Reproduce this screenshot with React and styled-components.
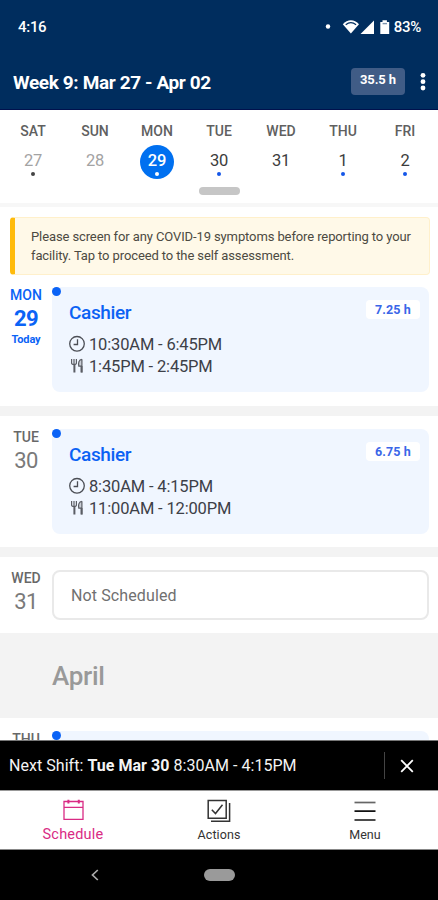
import React from 'react';
import styled, { createGlobalStyle } from 'styled-components';

const GlobalStyle = createGlobalStyle`
  * {
    box-sizing: border-box;
  }

  body {
    margin: 0;
    background: #000;
    font-family: Roboto, 'Noto Sans', sans-serif;
  }
`;

const Screen = styled.div`
  width: 438px;
  height: 900px;
  display: flex;
  flex-direction: column;
  overflow: hidden;
  background: #fff;
`;

const Header = styled.header`
  height: 110px;
  flex: none;
  background: #002d5e;
  border-bottom: 1px solid #00114d;
  color: #fff;
`;

const StatusBar = styled.div`
  display: flex;
  align-items: center;
  height: 54px;
  padding: 0 17px 0 18px;
  font-size: 15px;
  font-weight: 500;
  letter-spacing: -0.3px;

  svg {
    display: block;
  }
`;

const Clock = styled.span`
  flex: 1;
`;

const TitleBar = styled.div`
  display: flex;
  align-items: center;
  height: 55px;
  padding: 0 12px 0 13px;
`;

const Title = styled.h1`
  flex: 1;
  margin: 2px 0 0;
  font-size: 19px;
  line-height: 24px;
  font-weight: 700;
  letter-spacing: -0.38px;
`;

const TotalHours = styled.span`
  width: 54px;
  height: 27px;
  margin-right: 15px;
  border-radius: 4px;
  background: #405c86;
  font-size: 13px;
  font-weight: 700;
  line-height: 24px;
  letter-spacing: -0.1px;
  text-align: center;
`;

const Week = styled.div`
  flex: none;
  height: 97px;
  padding: 0 2px;
  border-bottom: 4px solid #f7f7f7;
`;

const WeekDays = styled.div`
  display: grid;
  grid-template-columns: repeat(7, 62px);
  height: 77px;
  padding-top: 13px;
`;

const WeekDay = styled.div`
  display: flex;
  flex-direction: column;
  align-items: center;
`;

const WeekDayName = styled.span`
  font-size: 14px;
  line-height: 16px;
  font-weight: 500;
  color: #606060;
`;

const WeekDayNumber = styled.span`
  display: flex;
  flex-direction: column;
  align-items: center;
  width: 34px;
  height: 34px;
  margin-top: 6px;
  padding-top: 6px;
  border-radius: 50%;
  font-size: 16.5px;
  line-height: 19px;
  letter-spacing: -0.2px;
  font-weight: ${props => (props.$active ? 500 : 400)};
  background: ${props => (props.$active ? '#0070f0' : 'transparent')};
  color: ${props => (props.$active ? '#fff' : props.$past ? '#a3a3a3' : '#3c3c3c')};
`;

const Dot = styled.i`
  width: 4px;
  height: 4px;
  margin-top: 2px;
  border-radius: 50%;
  background: ${props => props.$color};
`;

const Handle = styled.div`
  width: 41px;
  height: 8px;
  margin: 0 auto;
  border-radius: 4px;
  background: #c6c6c6;
`;

const List = styled.main`
  flex: 1;
  min-height: 0;
  overflow: hidden;
`;

const Banner = styled.p`
  height: 58px;
  margin: 10px 8px 0 10px;
  padding: 9px 0 0 16px;
  border: 1px solid #fff0cb;
  border-left: 5px solid #ffbb0c;
  border-radius: 4px;
  background: #fff9e8;
  color: #4c4a42;
  font-size: 13px;
  line-height: 19px;
  letter-spacing: -0.11px;
  white-space: nowrap;
`;

const DayRow = styled.section`
  display: flex;
  padding: ${props => (props.$first ? '12px 9px 14px 0' : '13px 9px 13px 0')};
  border-bottom: ${props => (props.$last ? '0' : '10px')} solid #f3f3f3;
`;

const DayLabel = styled.div`
  display: flex;
  flex-direction: column;
  align-items: center;
  width: 52px;
  color: ${props => (props.$today ? '#0b63f6' : '#686868')};
`;

const DayName = styled.span`
  font-size: 14px;
  line-height: 16px;
  font-weight: 500;
`;

const DayNumber = styled.span`
  margin-top: 3px;
  font-size: 22px;
  line-height: 26px;
  letter-spacing: -0.5px;
  font-weight: ${props => (props.$today ? 700 : 400)};
  color: ${props => (props.$today ? 'inherit' : '#7a7a7a')};
`;

const TodayMark = styled.span`
  font-size: 11px;
  line-height: 16px;
  font-weight: 700;
  letter-spacing: -0.1px;
`;

const ShiftCard = styled.article`
  position: relative;
  flex: 1;
  height: 105px;
  padding: 14px 9px 0 17px;
  border-radius: 8px;
  background: #f0f6ff;
`;

const ShiftMarker = styled.i`
  position: absolute;
  top: 0;
  left: 0;
  width: 9px;
  height: 9px;
  border-radius: 50%;
  background: #0b63f6;
`;

const ShiftTop = styled.div`
  display: flex;
  align-items: flex-start;
  justify-content: space-between;
  height: 32px;
`;

const ShiftRole = styled.h2`
  margin: 0;
  font-size: 19px;
  line-height: 24px;
  font-weight: 500;
  letter-spacing: -0.38px;
  color: #0b62f4;
`;

const ShiftHours = styled.span`
  width: 54px;
  height: 19px;
  margin-top: -1px;
  border-radius: 4px;
  background: #fff;
  color: #3b66e8;
  font-size: 12.5px;
  font-weight: 700;
  line-height: 20px;
  text-align: center;
  letter-spacing: 0.1px;
`;

const ShiftLine = styled.div`
  display: flex;
  align-items: center;
  gap: 3px;
  height: 22px;
  font-size: 16.5px;
  letter-spacing: -0.16px;
  color: #3d4048;

  svg {
    display: block;
  }
`;

const EmptyCard = styled.div`
  flex: 1;
  height: 50px;
  padding-left: 17px;
  border: 2px solid #e9e9e9;
  border-radius: 8px;
  color: #707070;
  font-size: 16px;
  line-height: 48px;
  letter-spacing: 0.12px;
`;

const Month = styled.h2`
  height: 85px;
  margin: 0;
  padding-left: 52px;
  background: #f3f3f3;
  color: #999;
  font-size: 26px;
  line-height: 87px;
  font-weight: 500;
  letter-spacing: -0.3px;
`;

const NextShift = styled.div`
  display: flex;
  align-items: center;
  flex: none;
  height: 51px;
  padding-left: 9px;
  border-top: 1px solid #777;
  border-bottom: 1px solid #999;
  background: #000;
  color: #f4f4f4;
  font-size: 16px;
  letter-spacing: 0.04px;
`;

const NextShiftText = styled.span`
  flex: 1;
`;

const CloseButton = styled.button`
  display: flex;
  align-items: center;
  justify-content: center;
  width: 54px;
  height: 27px;
  padding: 0 9px 0 0;
  border: 0;
  border-left: 1px solid #444;
  background: none;
`;

const Tabs = styled.nav`
  display: grid;
  grid-template-columns: repeat(3, 1fr);
  flex: none;
  height: 59px;
  border-bottom: 1px solid #888;
`;

const Tab = styled.a`
  display: flex;
  flex-direction: column;
  align-items: center;
  padding-top: 7px;
  font-size: ${props => (props.$active ? '14.5px' : '12.5px')};
  line-height: 19px;
  letter-spacing: ${props => (props.$active ? '0.2px' : '0.1px')};
  color: ${props => (props.$active ? '#d92b84' : '#333')};

  svg {
    display: block;
    margin-bottom: 3px;
  }
`;

const SystemNav = styled.div`
  display: grid;
  grid-template-columns: 190px 58px 190px;
  align-items: center;
  justify-items: center;
  flex: none;
  height: 50px;
  background: #000;
`;

const HomePill = styled.i`
  width: 31px;
  height: 12px;
  border-radius: 6px;
  background: #9a9a9a;
`;

const StatusIcons = () => (
  <svg width="69" height="18" viewBox="0 0 69 18" fill="#fff">
    <circle cx="3" cy="8.5" r="2.2" />
    <path d="M17.8 6.2C22.5 .8 29.3 .8 34 6.2L25.9 15.6z" />
    <path d="M20.7 6.7Q25.9 2.6 31.1 6.7" fill="none" stroke="#002d5e" strokeWidth="1.1" />
    <path d="M49 2.5V16H35.5z" />
    <path d="M55.3 4h2.2V2.2h4.4V4h2.3v12h-8.9z" />
    <path d="M57.6 5.6h4.4" stroke="#7d94b0" strokeWidth="1.4" />
  </svg>
);

const MoreIcon = () => (
  <svg width="6" height="20" viewBox="0 0 6 20" fill="#fff">
    <circle cx="3" cy="3.3" r="2.4" />
    <circle cx="3" cy="9.7" r="2.4" />
    <circle cx="3" cy="16" r="2.4" />
  </svg>
);

const ClockIcon = () => (
  <svg width="17" height="18" viewBox="0 0 17 18" fill="none" stroke="#4b4e55" strokeWidth="1.3">
    <circle cx="8" cy="8.8" r="7.3" />
    <path d="M8.5 4.2V9.5H4.6" />
  </svg>
);

const MealIcon = () => (
  <svg width="17" height="16" viewBox="0 0 17 16" fill="none" stroke="#5a5d64" strokeWidth="1.2">
    <path d="M2.6 1V5Q2.6 6.5 5 6.5Q7.4 6.5 7.4 5V1M5 1V7" />
    <path d="M5.4 6.5V14.5" strokeWidth="2" />
    <path d="M12.9 1.2V14.5M12.9 1.3C9.8 1.4 9.2 5 9.8 8.2H12.6" fill="#c9cdd5" />
    <path d="M12.5 8V14.5" strokeWidth="2" />
  </svg>
);

const CloseIcon = () => (
  <svg width="14" height="14" viewBox="0 0 14 14" stroke="#fff" strokeWidth="1.8">
    <path d="M1.2 1.2L12.8 12.8M12.8 1.2L1.2 12.8" />
  </svg>
);

const CalendarIcon = () => (
  <svg width="24" height="24" viewBox="0 0 24 24" fill="none" stroke="#d92b84" strokeWidth="1.3">
    <path d="M3 3.5H22V21.3H3zM3 9.3H22" />
    <path d="M7.4 1.8V5.5M17.8 1.8V5.5" strokeWidth="2" />
  </svg>
);

const ActionsIcon = () => (
  <svg width="24" height="24" viewBox="0 0 24 24" fill="none" stroke="#333" strokeWidth="1.5">
    <path d="M1.2 2.5H19.2V20.2H1.2z" />
    <path d="M4.8 11.7L8.5 15.5L15.5 6.7" />
    <path d="M22.6 5V23.2H4" />
  </svg>
);

const MenuIcon = () => (
  <svg width="24" height="24" viewBox="0 0 24 24" stroke="#111" strokeWidth="1.7">
    <path d="M1.5 4.5H22.5" stroke="#666" />
    <path d="M1.5 13.2H22.5M1.5 22H22.5" />
  </svg>
);

const BackIcon = () => (
  <svg width="8" height="12" viewBox="0 0 8 12" fill="none" stroke="#aaa" strokeWidth="1.7">
    <path d="M6.8 1L1.5 6L6.8 11" />
  </svg>
);

const week = [
  { name: 'SAT', number: 27, past: true, dot: '#444' },
  { name: 'SUN', number: 28, past: true },
  { name: 'MON', number: 29, active: true, dot: '#fff' },
  { name: 'TUE', number: 30, dot: '#1456e8' },
  { name: 'WED', number: 31 },
  { name: 'THU', number: 1, dot: '#1456e8' },
  { name: 'FRI', number: 2, dot: '#1456e8' },
];

const Day = ({ name, number, today, first, last, children }) => (
  <DayRow $first={first} $last={last}>
    <DayLabel $today={today}>
      <DayName>{name}</DayName>
      {number && <DayNumber $today={today}>{number}</DayNumber>}
      {today && <TodayMark>Today</TodayMark>}
    </DayLabel>
    {children}
  </DayRow>
);

const Shift = ({ role, hours, time, meal }) => (
  <ShiftCard>
    <ShiftMarker />
    <ShiftTop>
      <ShiftRole>{role}</ShiftRole>
      <ShiftHours>{hours}</ShiftHours>
    </ShiftTop>
    <ShiftLine><ClockIcon />{time}</ShiftLine>
    <ShiftLine><MealIcon />{meal}</ShiftLine>
  </ShiftCard>
);

const App = () => (
  <>
    <GlobalStyle />
    <Screen>
      <Header>
        <StatusBar>
          <Clock>4:16</Clock>
          <StatusIcons />
          <span>83%</span>
        </StatusBar>
        <TitleBar>
          <Title>Week 9: Mar 27 - Apr 02</Title>
          <TotalHours>35.5 h</TotalHours>
          <MoreIcon />
        </TitleBar>
      </Header>
      <Week>
        <WeekDays>
          {week.map(day => (
            <WeekDay key={day.name}>
              <WeekDayName>{day.name}</WeekDayName>
              <WeekDayNumber $active={day.active} $past={day.past}>
                {day.number}
                {day.dot && <Dot $color={day.dot} />}
              </WeekDayNumber>
            </WeekDay>
          ))}
        </WeekDays>
        <Handle />
      </Week>
      <List>
        <Banner>
          Please screen for any COVID-19 symptoms before reporting to your
          <br />
          facility. Tap to proceed to the self assessment.
        </Banner>
        <Day name="MON" number={29} today first>
          <Shift role="Cashier" hours="7.25 h" time="10:30AM - 6:45PM" meal="1:45PM - 2:45PM" />
        </Day>
        <Day name="TUE" number={30}>
          <Shift role="Cashier" hours="6.75 h" time="8:30AM - 4:15PM" meal="11:00AM - 12:00PM" />
        </Day>
        <Day name="WED" number={31} last>
          <EmptyCard>Not Scheduled</EmptyCard>
        </Day>
        <Month>April</Month>
        <Day name="THU" last>
          <ShiftCard>
            <ShiftMarker />
          </ShiftCard>
        </Day>
      </List>
      <NextShift>
        <NextShiftText>Next Shift: <b>Tue Mar 30</b> 8:30AM - 4:15PM</NextShiftText>
        <CloseButton aria-label="Dismiss"><CloseIcon /></CloseButton>
      </NextShift>
      <Tabs>
        <Tab $active><CalendarIcon />Schedule</Tab>
        <Tab><ActionsIcon />Actions</Tab>
        <Tab><MenuIcon />Menu</Tab>
      </Tabs>
      <SystemNav>
        <BackIcon />
        <HomePill />
      </SystemNav>
    </Screen>
  </>
);

export default App;
